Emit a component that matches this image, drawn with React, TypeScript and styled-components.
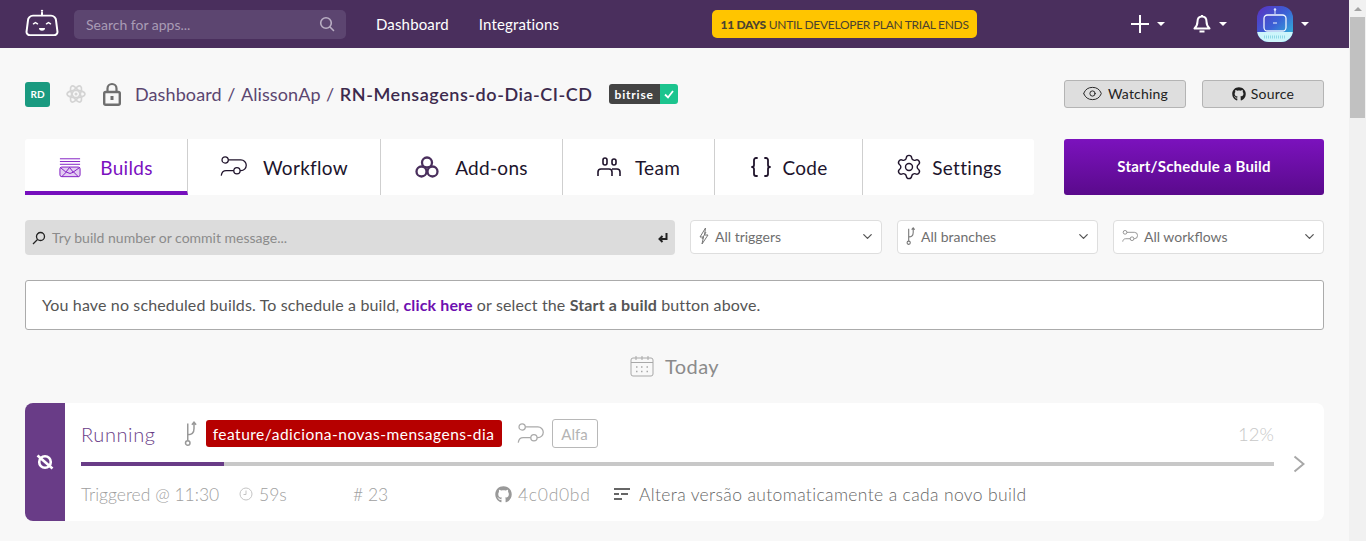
import styled, { createGlobalStyle } from "styled-components";
import { Braces, ChevronDown, Eye, Settings } from "lucide-react";
import { FaGithub } from "react-icons/fa";

const GlobalStyle = createGlobalStyle`
  html, body {
    margin: 0;
    padding: 0;
    height: 100%;
    overflow: hidden;
    background: #f8f8f8;
    font-family: "Lato", "Open Sans", sans-serif;
  }
  #root { height: 100%; }
  * { box-sizing: border-box; }
`;

const Shell = styled.div`
  display: flex;
  height: 541px;
  overflow: hidden;
`;

const Page = styled.div`
  flex: 1;
  min-width: 0;
`;

const ScrollTrack = styled.div`
  width: 17px;
  background: #f1f1f1;
  display: flex;
  flex-direction: column;
  align-items: center;
`;

const ScrollArrow = styled.div`
  height: 17px;
  display: flex;
  align-items: center;
  justify-content: center;
  &::before {
    content: "";
    border-left: 4px solid transparent;
    border-right: 4px solid transparent;
    border-bottom: 4px solid #a3a3a3;
  }
`;

const ScrollThumb = styled.div`
  width: 15px;
  height: 101px;
  background: #c1c1c1;
`;

const Header = styled.header`
  height: 48px;
  background: #4a2f5d;
  display: flex;
  align-items: center;
  padding-left: 25px;
  color: #fff;
`;

const LogoWrap = styled.div`
  width: 34px;
  height: 32px;
  margin-right: 15px;
  display: flex;
  align-items: flex-start;
`;

const SearchBox = styled.div`
  width: 272px;
  height: 29px;
  border-radius: 5px;
  background: #5c4570;
  display: flex;
  align-items: center;
  justify-content: space-between;
  padding: 0 11px 0 12px;
  font-size: 14px;
  color: #a99cb5;
  margin-right: 30px;
`;

const NavLink = styled.a`
  font-size: 15px;
  color: #fff;
  margin-right: 30px;
  letter-spacing: 0.15px;
`;

const TrialBadge = styled.div`
  margin-left: 123px;
  width: 265px;
  height: 28px;
  border-radius: 5px;
  background: #ffc500;
  color: #4b4330;
  font-size: 12px;
  letter-spacing: -0.28px;
  display: flex;
  align-items: center;
  justify-content: center;
  white-space: nowrap;
  b { font-weight: 900; margin-right: 3px; }
`;

const HeaderActions = styled.div`
  margin-left: auto;
  display: flex;
  align-items: center;
  padding-right: 40px;
`;

const ActionItem = styled.div<{ $gap: number }>`
  display: flex;
  align-items: center;
  gap: 8px;
  margin-right: ${(p) => p.$gap}px;
`;

const Caret = styled.span`
  border-left: 4px solid transparent;
  border-right: 4px solid transparent;
  border-top: 4px solid #fff;
`;

const Avatar = styled.div`
  width: 36px;
  height: 36px;
  border-radius: 12px;
  overflow: hidden;
  background: linear-gradient(135deg, #5a2fc0 0%, #3b62d6 50%, #2fc6d8 100%);
  display: flex;
`;

const Content = styled.main`
  padding: 32px 25px 0;
`;

const TitleRow = styled.div`
  display: flex;
  align-items: center;
  height: 28px;
  margin-bottom: 31px;
`;

const OwnerBadge = styled.div`
  width: 25px;
  height: 25px;
  border-radius: 3px;
  background: #1a9a80;
  color: #fff;
  font-size: 10px;
  font-weight: 700;
  display: flex;
  align-items: center;
  justify-content: center;
  margin-right: 16px;
`;

const Crumbs = styled.div`
  display: flex;
  align-items: center;
  font-size: 18px;
  color: #5b4670;
  font-weight: 400;
  margin-left: 14px;
  padding-bottom: 1px;
  letter-spacing: 0.1px;
  white-space: nowrap;
`;

const LockSlot = styled.span`
  margin-left: 17px;
  display: flex;
`;

const Sep = styled.span`
  margin: 0 5.5px;
`;

const RepoName = styled.strong`
  color: #3c2a4d;
  font-weight: 600;
  letter-spacing: 0.55px;
`;

const StatusBadge = styled.div`
  margin-left: 16px;
  height: 20px;
  display: flex;
  border-radius: 3px;
  overflow: hidden;
  font-size: 12px;
  font-weight: 700;
  color: #fff;
  letter-spacing: 0.8px;
`;

const StatusName = styled.span`
  background: #444;
  padding: 0 6px;
  display: flex;
  align-items: center;
`;

const StatusOk = styled.span`
  background: #1cc48e;
  width: 18px;
  display: flex;
  align-items: center;
  justify-content: center;
`;

const TitleActions = styled.div`
  margin-left: auto;
  display: flex;
  gap: 16px;
`;

const GhostButton = styled.button`
  width: 122px;
  height: 28px;
  border: 1px solid #b4b4b4;
  border-radius: 3px;
  background: #dedede;
  display: flex;
  align-items: center;
  justify-content: center;
  gap: 5px;
  padding: 0 0 1px;
  font-family: inherit;
  font-size: 14px;
  letter-spacing: 0.2px;
  color: #222;
`;

const TabRow = styled.div`
  display: flex;
  justify-content: space-between;
  margin-bottom: 25px;
`;

const Tabs = styled.nav`
  display: flex;
  width: 1009px;
  height: 56px;
  background: #fff;
  border-radius: 3px;
`;

const Tab = styled.div<{ $width: number; $gap: number; $active?: boolean }>`
  width: ${(p) => p.$width}px;
  display: flex;
  align-items: center;
  justify-content: center;
  gap: ${(p) => p.$gap}px;
  font-size: 19px;
  letter-spacing: 0.3px;
  color: ${(p) => (p.$active ? "#7b10bf" : "#20142c")};
  border-right: 1px solid #cfcfcf;
  border-bottom: ${(p) => (p.$active ? "4px solid #760fbd" : "0")};
  padding-top: ${(p) => (p.$active ? "4px" : "0")};
  &:last-child { border-right: 0; }
`;

const StartButton = styled.button`
  width: 260px;
  height: 56px;
  border: 0;
  border-radius: 3px;
  padding: 0 0 2px;
  background: linear-gradient(180deg, #7b12bd 0%, #5a0a8c 100%);
  color: #fff;
  font-family: inherit;
  font-size: 15px;
  letter-spacing: 0.2px;
  font-weight: 700;
`;

const FilterRow = styled.div`
  display: flex;
  gap: 15px;
  margin-bottom: 25px;
`;

const BuildSearch = styled.div`
  width: 650px;
  height: 35px;
  background: #dcdcdc;
  border-radius: 4px;
  display: flex;
  align-items: center;
  padding: 0 7px;
  gap: 6px;
  font-size: 14px;
  color: #8b8b8b;
`;

const EnterMark = styled.span`
  margin-left: auto;
  display: flex;
`;

const Select = styled.div<{ $width: number }>`
  width: ${(p) => p.$width}px;
  height: 34px;
  background: #fff;
  border: 1px solid #dedede;
  border-radius: 4px;
  display: flex;
  align-items: center;
  gap: 6px;
  padding: 0 6px 2px 8px;
  font-size: 14px;
  color: #6f6f6f;
  svg:last-child { margin-left: auto; color: #555; }
`;

const Notice = styled.div`
  height: 50px;
  background: #fff;
  border: 1px solid #ababab;
  border-radius: 3px;
  display: flex;
  align-items: center;
  padding: 0 0 2px 16px;
  font-size: 16px;
  letter-spacing: 0.135px;
  color: #555;
  white-space: pre;
  b { font-weight: 700; }
  a { font-weight: 700; color: #6d0fb0; }
`;

const DayLabel = styled.div`
  height: 73px;
  display: flex;
  align-items: center;
  justify-content: center;
  gap: 11px;
  padding-bottom: 2px;
  font-size: 20px;
  color: #8b8b8b;
  letter-spacing: 0.4px;
`;

const BuildCard = styled.article`
  height: 118px;
  display: flex;
  border-radius: 8px;
  overflow: hidden;
  background: #fff;
`;

const StatusRail = styled.div`
  width: 40px;
  background: #693c87;
  display: flex;
  align-items: center;
  justify-content: center;
`;

const CardBody = styled.div`
  flex: 1;
  display: flex;
  flex-direction: column;
  padding: 16px 0 0 16px;
`;

const CardTop = styled.div`
  display: flex;
  align-items: center;
  height: 29px;
  margin-right: 50px;
`;

const RunState = styled.span`
  font-size: 20px;
  font-weight: 300;
  color: #693c87;
  width: 103px;
  letter-spacing: 0.6px;
`;

const BranchChip = styled.span`
  margin-left: 9px;
  margin-right: 15px;
  width: 296px;
  height: 27px;
  border-radius: 3px;
  background: #b60000;
  color: #fff;
  font-size: 15.5px;
  letter-spacing: 0.5px;
  display: flex;
  align-items: center;
  justify-content: center;
`;

const WorkflowChip = styled.span`
  margin-left: 8px;
  width: 46px;
  height: 29px;
  border: 1px solid #b8b8b8;
  border-radius: 3px;
  color: #b4b4b4;
  font-size: 15px;
  display: flex;
  align-items: center;
  justify-content: center;
`;

const Percent = styled.span`
  margin-left: auto;
  font-size: 18.5px;
  font-weight: 300;
  color: #c8c8c8;
`;

const ProgressLine = styled.div`
  display: flex;
  align-items: center;
  height: 22px;
  margin-top: 5px;
  gap: 19px;
  padding-right: 19px;
`;

const ProgressTrack = styled.div`
  flex: 1;
  height: 4px;
  background: #c8c8c8;
`;

const ProgressFill = styled.div`
  height: 100%;
  background: #693c87;
`;

const MetaRow = styled.div`
  display: flex;
  align-items: center;
  height: 26px;
  margin-top: 6px;
  font-size: 17.5px;
  font-weight: 300;
  color: #a0a0a0;
  white-space: nowrap;
`;

const MetaItem = styled.span<{ $width: number; $spacing?: number }>`
  width: ${(p) => p.$width}px;
  display: flex;
  align-items: center;
  gap: 6px;
  letter-spacing: ${(p) => p.$spacing ?? 0}px;
`;

const CommitMessage = styled.span`
  display: flex;
  align-items: center;
  gap: 9px;
  color: #666;
  letter-spacing: 0.36px;
`;

const Logo = () => (
  <svg width="34" height="29" viewBox="0 0 34 32" preserveAspectRatio="none" fill="none" stroke="#fff" strokeWidth="2" strokeLinecap="round">
    <circle cx="17" cy="3" r="1.200" fill="#fff" stroke="none" />
    <path d="M17 5v3" />
    <path d="M8 8.500h18a5 5 0 0 1 5 5l1.500 13a3.500 3.500 0 0 1-3.500 3.500H5a3.500 3.500 0 0 1-3.500-3.500L3 13.500a5 5 0 0 1 5-5z" />
    <path d="M8.500 17.500l2-1.500 2 1.500M21.500 17.500l2-1.500 2 1.500" strokeWidth="1.500" />
    <path d="M14 22h6a3 3 0 0 1-6 0z" fill="#fff" stroke="none" />
  </svg>
);

const SearchIcon = () => (
  <svg width="16" height="16" viewBox="0 0 16 16" fill="none" stroke="#b9aec3" strokeWidth="1.600" strokeLinecap="round">
    <circle cx="7" cy="7" r="5.300" />
    <path d="M11 11l3.500 3.500" />
  </svg>
);

const PlusIcon = () => (
  <svg width="18" height="18" viewBox="0 0 18 18" stroke="#fff" strokeWidth="2">
    <path d="M9 0v18M0 9h18" />
  </svg>
);

const BellIcon = () => (
  <svg width="18" height="20" viewBox="0 0 18 20" fill="none" stroke="#fff" strokeWidth="2" strokeLinejoin="round">
    <path d="M9 2.500c-3 0-4.500 2.200-4.500 5 0 3.500-1.500 5.500-3 7h15c-1.500-1.500-3-3.500-3-7 0-2.800-1.500-5-4.500-5z" />
    <path d="M6.500 17.500h5" />
    <path d="M9 1v1.500" />
  </svg>
);

const AvatarArt = () => (
  <svg width="36" height="36" viewBox="0 0 36 36" fill="none">
    <path d="M18 3v5" stroke="#dfe8ff" strokeWidth="1" />
    <circle cx="18" cy="3.500" r="1.200" fill="#dfe8ff" />
    <rect x="7" y="9" width="22" height="16" rx="3.500" stroke="#f0f5ff" strokeWidth="1.300" />
    <path d="M16 17h4" stroke="#f0f5ff" strokeWidth="1" />
    <rect x="0" y="26" width="36" height="10" fill="#cdf5fb" />
    <path d="M7 31h22" stroke="#8fd8e6" strokeWidth="3" strokeDasharray="1 1" />
  </svg>
);

const ReactIcon = () => (
  <svg width="20" height="22" viewBox="0 0 20 22" fill="none" stroke="#d4d4d4" strokeWidth="1.700">
    <ellipse cx="10" cy="11" rx="9" ry="3.700" />
    <ellipse cx="10" cy="11" rx="9" ry="3.700" transform="rotate(60 10 11)" />
    <ellipse cx="10" cy="11" rx="9" ry="3.700" transform="rotate(120 10 11)" />
    <circle cx="10" cy="11" r="1.500" fill="#d4d4d4" stroke="none" />
  </svg>
);

const LockIcon = () => (
  <svg width="18" height="24" viewBox="0 0 18 24" fill="none">
    <path d="M4.500 10V6.500a4.500 4.500 0 0 1 9 0V10" stroke="#6f6f6f" strokeWidth="2.200" />
    <rect x="1.200" y="10" width="15.600" height="12.800" rx="1.500" stroke="#6f6f6f" strokeWidth="2.400" />
    <rect x="7.500" y="14" width="3" height="4" fill="#6f6f6f" />
  </svg>
);

const BuildsIcon = () => (
  <svg width="22" height="21" viewBox="0 0 24 22" fill="none" stroke="#7b10bf" strokeWidth="1">
    <path d="M1 1.500h22M1 4.500h22M1 7.500h22" />
    <rect x="1" y="10.500" width="22" height="10.500" rx="2" fill="#c89ae6" fillOpacity=".5" />
    <path d="M1.500 11l6 5 4-5 4 5 7-5M3 21l5-5 4 1.500 4-1.500 5 5" />
  </svg>
);

const WorkflowIcon = ({ color = "#20142c", size = 27 }: { color?: string; size?: number }) => (
  <svg width={size} height={size * 0.8} viewBox="0 0 27 22" fill="none" stroke={color} strokeWidth="1.300">
    <circle cx="5" cy="4" r="3.200" />
    <circle cx="17" cy="15" r="3.200" />
    <path d="M8.200 4H21a5.500 5.500 0 0 1 0 11h-.800M13.800 15H6c-3 0-4.500 2-5 5" />
  </svg>
);

const AddonsIcon = () => (
  <svg width="24" height="22" viewBox="0 0 24 22" fill="none" stroke="#4a2f5d" strokeWidth="2.300">
    <circle cx="12" cy="6.500" r="5" />
    <circle cx="6.500" cy="15.500" r="5" />
    <circle cx="17.500" cy="15.500" r="5" />
  </svg>
);

const TeamIcon = () => (
  <svg width="24" height="20" viewBox="0 0 24 20" fill="none" stroke="#20142c" strokeWidth="1.600">
    <rect x="6" y="1" width="4" height="7" rx="2" />
    <rect x="15" y="2" width="4" height="6" rx="2" />
    <path d="M1 19v-4a3 3 0 0 1 3-3h8a3 3 0 0 1 3 3v4M15 12h5a3 3 0 0 1 3 3v4" />
  </svg>
);

const MagnifierIcon = () => (
  <svg width="14" height="14" viewBox="0 0 14 14" fill="none" stroke="#222" strokeWidth="1.300">
    <circle cx="8.500" cy="5.500" r="4" />
    <path d="M5.500 8.500L1 13" />
  </svg>
);

const EnterIcon = () => (
  <svg width="10" height="11" viewBox="0 0 10 11" fill="none" stroke="#222" strokeWidth="2">
    <path d="M8.500 1v6H2M4.500 4L1.500 7l3 3" />
  </svg>
);

const BoltIcon = () => (
  <svg width="10" height="18" viewBox="0 0 10 18" fill="none" stroke="#777" strokeWidth="1">
    <path d="M6.500 1L1 10h3.500L3 17l6-9H5.500z" />
    <path d="M7 5L3 12" />
  </svg>
);

const BranchIcon = ({ color = "#777", height = 18 }: { color?: string; height?: number }) => (
  <svg width={height * 0.5} height={height} viewBox="0 0 10 20" fill="none" stroke={color} strokeWidth="1.200">
    <circle cx="3" cy="17.500" r="1.800" />
    <path d="M3 15.500V2M3 11c4 0 5-2 5-5V1.500M6.300 3L8 1l1.700 2" />
  </svg>
);

const StatusIcon = () => (
  <svg width="20" height="20" viewBox="0 0 20 20" fill="none" stroke="#fff" strokeWidth="2.600">
    <circle cx="10" cy="10" r="5.800" />
    <path d="M2.500 3.500l15 13" />
  </svg>
);

const ClockIcon = () => (
  <svg width="14" height="14" viewBox="0 0 14 14" fill="none" stroke="#c4c4c4" strokeWidth="1">
    <circle cx="7" cy="7" r="6" />
    <path d="M7 3.500V7.500H4.500" />
  </svg>
);

const MessageIcon = () => (
  <svg width="16" height="14" viewBox="0 0 16 14" stroke="#666" strokeWidth="2">
    <path d="M0 2h16M0 7h5M7 7h7M0 12h8" />
  </svg>
);

const CalendarIcon = () => (
  <svg width="24" height="22" viewBox="0 0 24 22" fill="none" stroke="#a8a8a8" strokeWidth="1">
    <rect x="1" y="3" width="22" height="18" rx="2" />
    <path d="M1 7.500h22M6 1v4M12 1v4M18 1v4" />
    <path d="M6 12h1.500M11 12h1.500M16.500 12h1.500M6 16.500h1.500M11 16.500h1.500M16.500 16.500h1.500" strokeWidth="1.500" />
  </svg>
);

const CheckIcon = () => (
  <svg width="10" height="9" viewBox="0 0 10 9" fill="none" stroke="#fff" strokeWidth="1.800">
    <path d="M1 4.500l3 3 5-6.500" />
  </svg>
);

const NextIcon = () => (
  <svg width="12" height="18" viewBox="0 0 12 18" fill="none" stroke="#a8a8a8" strokeWidth="2">
    <path d="M1.500 1.500L10.500 9l-9 7.500" />
  </svg>
);

export default function App() {
  return (
    <Shell>
      <GlobalStyle />
      <Page>
        <Header>
          <LogoWrap>
            <Logo />
          </LogoWrap>
          <SearchBox>
            Search for apps...
            <SearchIcon />
          </SearchBox>
          <NavLink>Dashboard</NavLink>
          <NavLink>Integrations</NavLink>
          <TrialBadge>
            <b>11 DAYS</b> UNTIL DEVELOPER PLAN TRIAL ENDS
          </TrialBadge>
          <HeaderActions>
            <ActionItem $gap={28}>
              <PlusIcon />
              <Caret />
            </ActionItem>
            <ActionItem $gap={30}>
              <BellIcon />
              <Caret />
            </ActionItem>
            <ActionItem $gap={0}>
              <Avatar>
                <AvatarArt />
              </Avatar>
              <Caret />
            </ActionItem>
          </HeaderActions>
        </Header>
        <Content>
          <TitleRow>
            <OwnerBadge>RD</OwnerBadge>
            <ReactIcon />
            <LockSlot>
              <LockIcon />
            </LockSlot>
            <Crumbs>
              Dashboard<Sep>/</Sep>AlissonAp<Sep>/</Sep>
              <RepoName>RN-Mensagens-do-Dia-CI-CD</RepoName>
            </Crumbs>
            <StatusBadge>
              <StatusName>bitrise</StatusName>
              <StatusOk>
                <CheckIcon />
              </StatusOk>
            </StatusBadge>
            <TitleActions>
              <GhostButton>
                <Eye size={21} strokeWidth={1.1} />
                Watching
              </GhostButton>
              <GhostButton>
                <FaGithub size={14} />
                Source
              </GhostButton>
            </TitleActions>
          </TitleRow>

          <TabRow>
            <Tabs>
              <Tab $width={163} $gap={19} $active>
                <BuildsIcon />
                Builds
              </Tab>
              <Tab $width={193} $gap={16}>
                <WorkflowIcon />
                Workflow
              </Tab>
              <Tab $width={182} $gap={16}>
                <AddonsIcon />
                Add-ons
              </Tab>
              <Tab $width={152} $gap={14}>
                <TeamIcon />
                Team
              </Tab>
              <Tab $width={148} $gap={9}>
                <Braces size={24} strokeWidth={1.800} />
                Code
              </Tab>
              <Tab $width={171} $gap={9}>
                <Settings size={28} strokeWidth={1.200} />
                Settings
              </Tab>
            </Tabs>
            <StartButton>Start/Schedule a Build</StartButton>
          </TabRow>

          <FilterRow>
            <BuildSearch>
              <MagnifierIcon />
              Try build number or commit message...
              <EnterMark>
                <EnterIcon />
              </EnterMark>
            </BuildSearch>
            <Select $width={192}>
              <BoltIcon />
              All triggers
              <ChevronDown size={15} />
            </Select>
            <Select $width={201}>
              <BranchIcon />
              All branches
              <ChevronDown size={15} />
            </Select>
            <Select $width={211}>
              <WorkflowIcon color="#777" size={16} />
              All workflows
              <ChevronDown size={15} />
            </Select>
          </FilterRow>

          <Notice>
            You have no scheduled builds. To schedule a build, <a>click here</a> or select the <b>Start a build</b> button above.
          </Notice>

          <DayLabel>
            <CalendarIcon />
            Today
          </DayLabel>

          <BuildCard>
            <StatusRail>
              <StatusIcon />
            </StatusRail>
            <CardBody>
              <CardTop>
                <RunState>Running</RunState>
                <BranchIcon color="#999" height={25} />
                <BranchChip>feature/adiciona-novas-mensagens-dia</BranchChip>
                <WorkflowIcon color="#aaa" />
                <WorkflowChip>Alfa</WorkflowChip>
                <Percent>12%</Percent>
              </CardTop>
              <ProgressLine>
                <ProgressTrack>
                  <ProgressFill style={{ width: "12%" }} />
                </ProgressTrack>
                <NextIcon />
              </ProgressLine>
              <MetaRow>
                <MetaItem $width={158}>Triggered @ 11:30</MetaItem>
                <MetaItem $width={114}>
                  <ClockIcon />
                  59s
                </MetaItem>
                <MetaItem $width={142}># 23</MetaItem>
                <MetaItem $width={119} $spacing={0.7}>
                  <FaGithub size={17} color="#999" />
                  4c0d0bd
                </MetaItem>
                <CommitMessage>
                  <MessageIcon />
                  Altera versão automaticamente a cada novo build
                </CommitMessage>
              </MetaRow>
            </CardBody>
          </BuildCard>
        </Content>
      </Page>
      <ScrollTrack>
        <ScrollArrow />
        <ScrollThumb />
      </ScrollTrack>
    </Shell>
  );
}
